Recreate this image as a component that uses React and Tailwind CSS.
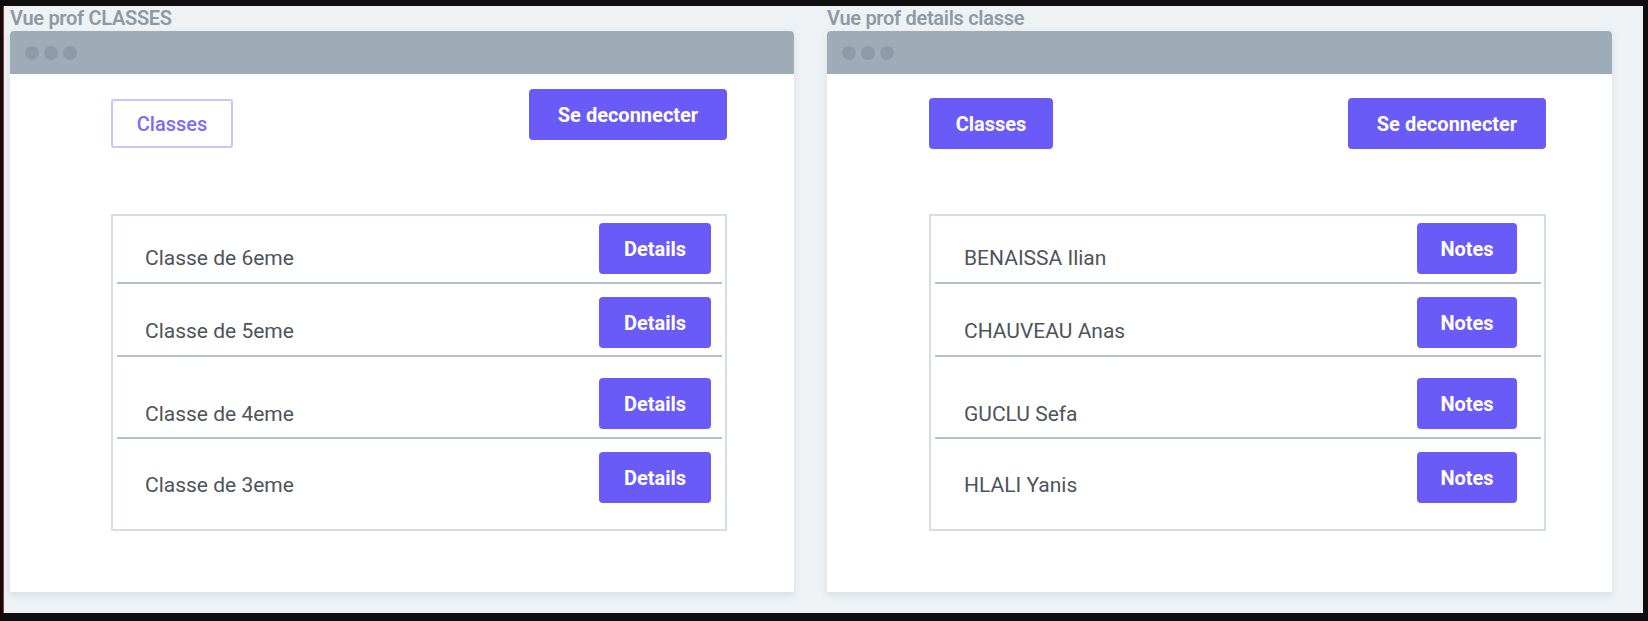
const CLASS_ROWS = [
  { label: 'Classe de 6eme', h: 'h-[68px]', bt: 'mt-[7px]', tt: 'pt-[30px]', sep: true },
  { label: 'Classe de 5eme', h: 'h-[73px]', bt: 'mt-[13px]', tt: 'pt-[35px]', sep: true },
  { label: 'Classe de 4eme', h: 'h-[82px]', bt: 'mt-[21px]', tt: 'pt-[45px]', sep: true },
  { label: 'Classe de 3eme', h: 'h-[90px]', bt: 'mt-[13px]', tt: 'pt-[34px]', sep: false },
]

const STUDENT_ROWS = [
  { label: 'BENAISSA Ilian', h: 'h-[68px]', bt: 'mt-[7px]', tt: 'pt-[30px]', sep: true },
  { label: 'CHAUVEAU Anas', h: 'h-[73px]', bt: 'mt-[13px]', tt: 'pt-[35px]', sep: true },
  { label: 'GUCLU Sefa', h: 'h-[82px]', bt: 'mt-[21px]', tt: 'pt-[45px]', sep: true },
  { label: 'HLALI Yanis', h: 'h-[90px]', bt: 'mt-[13px]', tt: 'pt-[34px]', sep: false },
]

function Window({ title, width, children }) {
  return (
    <div className={`flex flex-col ${width}`}>
      {/* Caption above the mockup */}
      <div className="h-[25px] pt-[2px] text-[20px] leading-[20px] font-semibold text-[#8d9aa6] tracking-[-0.3px]">
        {title}
      </div>
      <div className="flex-1 flex flex-col bg-white rounded-t-[4px] shadow-[0_3px_6px_rgba(150,165,180,0.25)]">
        <div className="h-[43px] bg-[#9eacb8] rounded-t-[4px] flex items-center gap-[5px] pl-[15px]">
          <span className="w-[14px] h-[14px] rounded-full bg-[#8d9ba8]" />
          <span className="w-[14px] h-[14px] rounded-full bg-[#8d9ba8]" />
          <span className="w-[14px] h-[14px] rounded-full bg-[#8d9ba8]" />
        </div>
        {children}
      </div>
    </div>
  )
}

function ListBox({ rows, action, btnWidth, rowPad }) {
  return (
    <div className="border-2 border-[#d6dee5] pl-[4px] pr-[3px] flex flex-col">
      {rows.map((row) => (
        <div
          key={row.label}
          className={`${row.h} ${rowPad} flex justify-between items-start ${row.sep ? 'border-b-2 border-[#b5c0ca]' : ''}`}
        >
          <span className={`${row.tt} text-[21px] leading-[24px] text-[#4e545b]`}>{row.label}</span>
          <button
            className={`${row.bt} ${btnWidth} h-[51px] rounded-[4px] bg-[#6a5af8] text-white text-[20px] font-bold`}
          >
            {action}
          </button>
        </div>
      ))}
    </div>
  )
}

export default function App() {
  return (
    <div
      className="w-[1648px] h-[621px] bg-[#0e0e0e] pt-[6px] pb-[8px] pl-[3px] pr-[5px] flex"
      style={{ fontFamily: 'Roboto, "Noto Sans", sans-serif' }}
    >
      <div className="flex-1 bg-[#eef2f5] border-l border-[#b8283d] flex pl-[6px] gap-[33px] pb-[21px]">
        {/* Vue prof CLASSES */}
        <Window title="Vue prof CLASSES" width="w-[784px]">
          <div className="flex flex-col pl-[101px] pr-[67px]">
            <div className="h-[140px] flex justify-between items-start">
              <button className="mt-[25px] w-[122px] h-[49px] rounded-[3px] border-2 border-[#cbc3fd] text-[#7b6cf6] text-[20px] font-medium">
                Classes
              </button>
              <button className="mt-[15px] w-[198px] h-[51px] rounded-[4px] bg-[#6a5af8] text-white text-[20px] font-bold">
                Se deconnecter
              </button>
            </div>
            <ListBox rows={CLASS_ROWS} action="Details" btnWidth="w-[112px]" rowPad="pl-[28px] pr-[11px]" />
          </div>
        </Window>

        {/* Vue prof details classe */}
        <Window title="Vue prof details classe" width="w-[785px]">
          <div className="flex flex-col pl-[102px] pr-[66px]">
            <div className="h-[140px] flex justify-between items-start">
              <button className="mt-[24px] w-[124px] h-[51px] rounded-[4px] bg-[#6a5af8] text-white text-[20px] font-bold">
                Classes
              </button>
              <button className="mt-[24px] w-[198px] h-[51px] rounded-[4px] bg-[#6a5af8] text-white text-[20px] font-bold">
                Se deconnecter
              </button>
            </div>
            <ListBox rows={STUDENT_ROWS} action="Notes" btnWidth="w-[100px]" rowPad="pl-[29px] pr-[24px]" />
          </div>
        </Window>
      </div>
    </div>
  )
}
